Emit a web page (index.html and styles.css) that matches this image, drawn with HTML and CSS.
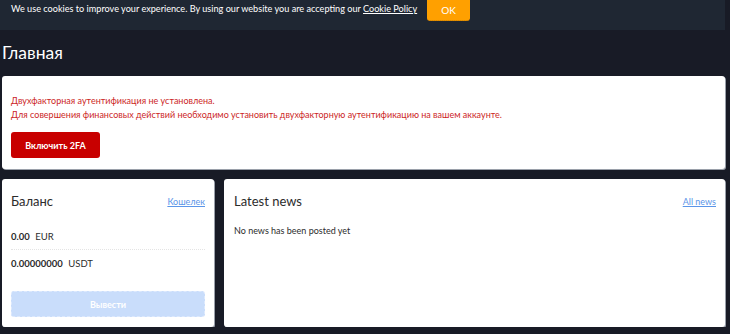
FILE: index.html
```html
<!DOCTYPE html>
<html lang="ru">

    <head>
        <meta charset="UTF-8">
        <meta name="viewport" content="width=device-width, initial-scale=1.0">
        <title>Главная</title>
        <link rel="stylesheet" href="styles.css">
    </head>

    <body>
        <div class="page">
            <div class="cookie-bar">
                <span class="cookie-text">We use cookies to improve your experience. By using our website you are accepting our <a href="#">Cookie Policy</a></span>
                <button class="cookie-ok">OK</button>
            </div>

            <h1 class="page-title">Главная</h1>

            <div class="card alert">
                <p class="alert-text">Двухфакторная аутентификация не установлена.</p>
                <p class="alert-text">Для совершения финансовых действий необходимо установить двухфакторную аутентификацию на вашем аккаунте.</p>
                <button class="btn-red">Включить 2FA</button>
            </div>

            <div class="row">
                <div class="card balance">
                    <div class="card-head">
                        <h2>Баланс</h2>
                        <a href="#">Кошелек</a>
                    </div>
                    <div class="balance-line"><b>0.00</b> EUR</div>
                    <div class="balance-line"><b>0.00000000</b> USDT</div>
                    <button class="btn-withdraw" disabled>Вывести</button>
                </div>

                <div class="card news">
                    <div class="card-head">
                        <h2>Latest news</h2>
                        <a href="#">All news</a>
                    </div>
                    <p class="empty">No news has been posted yet</p>
                </div>
            </div>
        </div>
    </body>

</html>
```

FILE: styles.css
```css
body {
    font-family: Lato, "Open Sans", sans-serif;
    background-color: #181b26;
    margin: 0;
    color: #2c2c2c;
}

.page {
    width: 725px;
    padding-left: 2px;
    box-sizing: border-box;
    display: flex;
    flex-direction: column;
}

.cookie-bar {
    background: #1f2733;
    height: 30px;
    margin-left: -2px;
    padding-left: 11px;
    display: flex;
    align-items: flex-start;
    gap: 10px;
}

.cookie-text {
    color: #ffffff;
    font-size: 9.15px;
    margin-top: 3px;
}

.cookie-text a {
    color: #ffffff;
}

.cookie-ok {
    background: #ffa000;
    border: none;
    border-bottom: 1px dotted #c27a00;
    border-radius: 0 0 3px 3px;
    color: #ffffff;
    font-family: inherit;
    font-size: 10px;
    width: 43px;
    height: 21px;
    padding: 0;
}

.page-title {
    color: #ffffff;
    font-size: 17.5px;
    font-weight: 400;
    margin: 12px 0 12px;
    line-height: 22px;
}

.card {
    background: #ffffff;
    border-radius: 3px;
    box-shadow: 1px 1px 0 #9aa0aa;
    box-sizing: border-box;
}

.alert {
    height: 93px;
    padding: 20px 9px 0;
}

.alert-text {
    color: #cc1f1f;
    font-size: 9px;
    margin: 0 0 4px;
    line-height: 10px;
}

.btn-red {
    background: #c80000;
    border: none;
    border-radius: 3px;
    color: #ffffff;
    font-family: inherit;
    font-size: 9px;
    font-weight: 700;
    width: 89px;
    height: 26px;
    margin-top: 8px;
}

.row {
    display: flex;
    gap: 10px;
    margin-top: 10px;
}

.balance {
    width: 212px;
    height: 148px;
    padding: 14px 9px 0;
}

.news {
    flex: 1;
    height: 148px;
    padding: 14px 9px 0 10px;
}

.card-head {
    display: flex;
    justify-content: space-between;
    align-items: center;
    height: 16px;
}

.card-head h2 {
    font-size: 13px;
    font-weight: 400;
    margin: 0;
    color: #2c2c2c;
}

.card-head a {
    color: #5b95e8;
    font-size: 9px;
}

.balance-line {
    font-size: 9.5px;
    padding: 13px 0 7px;
    margin-top: 9px;
}

.balance-line + .balance-line {
    border-top: 1px dotted #e4e4e4;
    margin-top: 0;
    padding-top: 8px;
    padding-bottom: 12px;
}

.balance-line b {
    font-weight: 700;
    margin-right: 3px;
}

.btn-withdraw {
    background: #c9ddfb;
    border: 1px dashed #dde9fd;
    border-radius: 3px;
    color: #ffffff;
    font-family: inherit;
    font-size: 9px;
    font-weight: 700;
    width: 100%;
    height: 26px;
    margin-top: 10px;
}

.empty {
    font-size: 9px;
    margin: 16px 0 0;
}
```
